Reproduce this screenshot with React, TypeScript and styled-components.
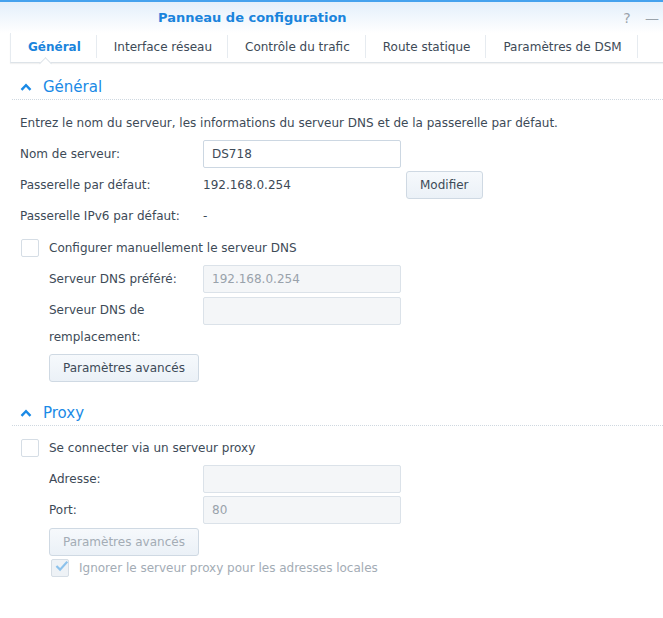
import React from 'react';
import styled, { createGlobalStyle } from 'styled-components';

const GlobalStyle = createGlobalStyle`
  body {
    margin: 0;
    background: #FFFFFF;
    font-family: "DejaVu Sans", Verdana, sans-serif;
    font-size: 12px;
    color: #3d4a57;
  }
`;

const Window = styled.div`
  width: 663px;
  height: 618px;
  overflow: hidden;
  background: #FFFFFF;
`;

const TitleBar = styled.div`
  height: 31px;
  border-top: 2px solid #45a2ee;
  background: linear-gradient(#e3effb, #ffffff);
  display: flex;
  align-items: center;
  padding-left: 158px;
`;

const Title = styled.div`
  flex: 1;
  color: #1a84dc;
  font-size: 13px;
  font-weight: bold;
`;

const TitleButton = styled.span`
  width: 28px;
  text-align: center;
  color: #9aa3ab;
  font-size: 14px;
  margin-right: -3px;
`;

const TabBar = styled.div`
  margin-left: 10px;
  height: 29px;
  display: flex;
  border-left: 1px solid #e6ebf0;
  border-bottom: 1px solid #dde3e8;
  box-shadow: 0 1px 1px rgba(0,0,0,0.05);
`;

const Tab = styled.div<{ $active?: boolean }>`
  padding: 0 15px 0 17px;
  display: flex;
  align-items: center;
  border-right: 1px solid #e6ebf0;
  margin: 2px 0 4px;
  color: ${p => p.$active ? '#1a84dc' : '#3d4a57'};
  font-weight: ${p => p.$active ? 'bold' : 'normal'};
  position: relative;
  &::after {
    content: '';
    display: ${p => p.$active ? 'block' : 'none'};
    position: absolute;
    left: 50%;
    bottom: -10px;
    width: 8px;
    height: 8px;
    margin-left: -12px;
    background: #FFFFFF;
    border-left: 1px solid #dde3e8;
    border-top: 1px solid #dde3e8;
    transform: rotate(45deg);
  }
`;

const Content = styled.div`
  padding: 12px 0 0 12px;
`;

const SectionHeader = styled.div`
  display: flex;
  align-items: center;
  height: 24px;
  padding-left: 8px;
  border-bottom: 1px dotted #cfd8e0;
  color: #1a8ae6;
  font-size: 15px;
  gap: 11px;
`;

const SectionBody = styled.div<{ $top: number; $bottom: number }>`
  padding: ${p => p.$top}px 0 ${p => p.$bottom}px 8px;
  display: flex;
  flex-direction: column;
`;

const Description = styled.div`
  height: 30px;
  display: flex;
  align-items: center;
`;

const FieldRow = styled.div<{ $indent?: boolean; $tall?: boolean }>`
  display: grid;
  grid-template-columns: ${p => p.$indent ? '29px 154px' : '0 183px'} 1fr;
  align-items: ${p => p.$tall ? 'start' : 'center'};
  height: ${p => p.$tall ? 'auto' : '31px'};
  padding-top: ${p => p.$tall ? '3px' : '0'};
`;

const Label = styled.div<{ $tall?: boolean }>`
  grid-column: 2;
  line-height: ${p => p.$tall ? '27px' : 'normal'};
`;

const Value = styled.div`
  grid-column: 3;
  display: flex;
  align-items: center;
`;

const Input = styled.div<{ $disabled?: boolean }>`
  width: 198px;
  height: 28px;
  box-sizing: border-box;
  border: 1px solid ${p => p.$disabled ? '#dbe2e9' : '#ccd7e2'};
  border-radius: 2px;
  background: ${p => p.$disabled ? '#f4f6f8' : '#FFFFFF'};
  color: ${p => p.$disabled ? '#99a2ab' : '#3d4a57'};
  padding: 0 8px;
  display: flex;
  align-items: center;
`;

const ValueText = styled.span<{ $width?: number }>`
  width: ${p => p.$width ? p.$width + 'px' : 'auto'};
`;

const Button = styled.div<{ $disabled?: boolean }>`
  height: 28px;
  box-sizing: border-box;
  padding: 0 13px;
  display: inline-flex;
  align-items: center;
  border: 1px solid #cfd9e3;
  border-radius: 3px;
  background: linear-gradient(#f6f9fc, #ebf1f7);
  color: ${p => p.$disabled ? '#a3acb5' : '#3d4a57'};
`;

const ButtonRow = styled.div<{ $indent?: boolean }>`
  padding-left: ${p => p.$indent ? '29px' : '0'};
  padding-top: 3px;
  display: flex;
`;

const CheckRow = styled.div<{ $indent?: boolean; $disabled?: boolean; $height?: number; $top?: number }>`
  display: flex;
  align-items: center;
  height: ${p => p.$height || 31}px;
  margin-top: ${p => p.$top || 0}px;
  gap: 10px;
  padding-left: ${p => p.$indent ? '31px' : '1px'};
  color: ${p => p.$disabled ? '#a3acb5' : '#3d4a57'};
`;

const Box = styled.span<{ $disabled?: boolean }>`
  width: 18px;
  height: 18px;
  box-sizing: border-box;
  border: 1px solid #d5dde5;
  border-radius: 2px;
  background: ${p => p.$disabled ? '#eef2f6' : '#FFFFFF'};
  display: flex;
  align-items: center;
  justify-content: center;
`;

const Caret = () => (
  <svg width="12" height="8" viewBox="0 0 12 8">
    <path d="M1.5 6.8 L6 2.2 L10.5 6.8" fill="none" stroke="#1a8ae6" strokeWidth="2.4" />
  </svg>
);

const Check = () => (
  <svg width="18" height="14" viewBox="0 0 18 14" style={{ marginLeft: 3, marginTop: -4 }}>
    <path d="M2 7 L7 12 L17 1" fill="none" stroke="#8cc2ec" strokeWidth="3" />
  </svg>
);

const tabs = ['Général', 'Interface réseau', 'Contrôle du trafic', 'Route statique', 'Paramètres de DSM'];

export default function App() {
  return (
    <Window>
      <GlobalStyle />
      <TitleBar>
        <Title>Panneau de configuration</Title>
        <TitleButton>?</TitleButton>
        <TitleButton>—</TitleButton>
      </TitleBar>
      <TabBar>
        {tabs.map((t, i) => <Tab key={t} $active={i === 0}>{t}</Tab>)}
      </TabBar>
      <Content>
        <SectionHeader><Caret />Général</SectionHeader>
        <SectionBody $top={8} $bottom={19}>
          <Description>Entrez le nom du serveur, les informations du serveur DNS et de la passerelle par défaut.</Description>
          <FieldRow>
            <Label>Nom de serveur:</Label>
            <Value><Input>DS718</Input></Value>
          </FieldRow>
          <FieldRow>
            <Label>Passerelle par défaut:</Label>
            <Value><ValueText $width={203}>192.168.0.254</ValueText><Button>Modifier</Button></Value>
          </FieldRow>
          <FieldRow>
            <Label>Passerelle IPv6 par défaut:</Label>
            <Value>-</Value>
          </FieldRow>
          <CheckRow $top={1}><Box />Configurer manuellement le serveur DNS</CheckRow>
          <FieldRow $indent>
            <Label>Serveur DNS préféré:</Label>
            <Value><Input $disabled>192.168.0.254</Input></Value>
          </FieldRow>
          <FieldRow $indent $tall>
            <Label $tall>Serveur DNS de<br />remplacement:</Label>
            <Value><Input $disabled /></Value>
          </FieldRow>
          <ButtonRow $indent><Button>Paramètres avancés</Button></ButtonRow>
        </SectionBody>
        <SectionHeader><Caret />Proxy</SectionHeader>
        <SectionBody $top={6} $bottom={0}>
          <CheckRow><Box />Se connecter via un serveur proxy</CheckRow>
          <FieldRow $indent>
            <Label>Adresse:</Label>
            <Value><Input $disabled /></Value>
          </FieldRow>
          <FieldRow $indent>
            <Label>Port:</Label>
            <Value><Input $disabled>80</Input></Value>
          </FieldRow>
          <ButtonRow $indent><Button $disabled>Paramètres avancés</Button></ButtonRow>
          <CheckRow $indent $disabled $height={24}><Box $disabled><Check /></Box>Ignorer le serveur proxy pour les adresses locales</CheckRow>
        </SectionBody>
      </Content>
    </Window>
  );
}
